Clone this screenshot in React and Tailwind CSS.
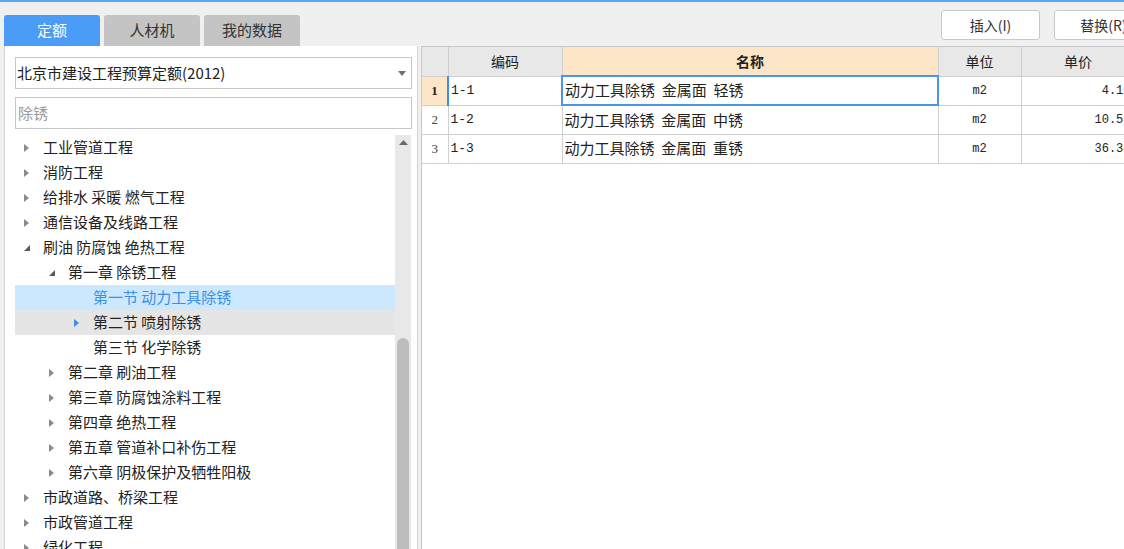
import React from 'react';

const treeRows = [
    { level: 0, text: "工业管道工程", icon: "closed" },
    { level: 0, text: "消防工程", icon: "closed" },
    { level: 0, text: "给排水 采暖 燃气工程", icon: "closed" },
    { level: 0, text: "通信设备及线路工程", icon: "closed" },
    { level: 0, text: "刷油 防腐蚀 绝热工程", icon: "open" },
    { level: 1, text: "第一章 除锈工程", icon: "open" },
    { level: 2, text: "第一节 动力工具除锈", icon: "none", selected: true },
    { level: 2, text: "第二节 喷射除锈", icon: "blue", hover: true },
    { level: 2, text: "第三节 化学除锈", icon: "none" },
    { level: 1, text: "第二章 刷油工程", icon: "closed" },
    { level: 1, text: "第三章 防腐蚀涂料工程", icon: "closed" },
    { level: 1, text: "第四章 绝热工程", icon: "closed" },
    { level: 1, text: "第五章 管道补口补伤工程", icon: "closed" },
    { level: 1, text: "第六章 阴极保护及牺牲阳极", icon: "closed" },
    { level: 0, text: "市政道路、桥梁工程", icon: "closed" },
    { level: 0, text: "市政管道工程", icon: "closed" },
    { level: 0, text: "绿化工程", icon: "closed" },
];

const rows = [
    { no: "1", code: "1-1", name: "动力工具除锈  金属面  轻锈", unit: "m2", price: "4.10" },
    { no: "2", code: "1-2", name: "动力工具除锈  金属面  中锈", unit: "m2", price: "10.57" },
    { no: "3", code: "1-3", name: "动力工具除锈  金属面  重锈", unit: "m2", price: "36.34" },
];

const indent = ["pl-[9px]", "pl-[34px]", "pl-[59px]"];

const TreeIcon = ({ type }) => {
    if (type === "closed")
        return <svg width="5" height="8" viewBox="0 0 5 8"><path d="M0 0 L5 4 L0 8 Z" fill="#8a8a8a" /></svg>;
    if (type === "blue")
        return <svg width="5" height="8" viewBox="0 0 5 8"><path d="M0 0 L5 4 L0 8 Z" fill="#3c8fe8" /></svg>;
    if (type === "open")
        return <svg width="6" height="6" viewBox="0 0 6 6"><path d="M6 0 L6 6 L0 6 Z" fill="#5a5a5a" /></svg>;
    return <span className="w-[5px]" />;
};

const App = () => {
    return (
        <div className="h-[549px] w-[1124px] overflow-hidden bg-[#f0f0f0] border-t-2 border-[#5aa5f5] flex text-[15px] text-[#222]"
             style={{ fontFamily: '"Noto Sans CJK SC", "Noto Sans", sans-serif' }}>
            {/* left side */}
            <div className="ml-[4px] w-[414px] flex flex-col shrink-0">
                <div className="pt-[13px] flex gap-[4px]">
                    <div className="w-[96px] h-[31px] rounded-t-[3px] bg-[#4a9cf7] text-white flex items-center justify-center">定额</div>
                    <div className="w-[96px] h-[31px] rounded-t-[3px] bg-[#c4c4c4] text-[#333] flex items-center justify-center">人材机</div>
                    <div className="w-[96px] h-[31px] rounded-t-[3px] bg-[#c4c4c4] text-[#333] flex items-center justify-center">我的数据</div>
                </div>
                <div className="flex-1 bg-white border-l border-r border-[#d4d4d4] pl-[10px] pr-[6px] pt-[11px] flex flex-col min-h-0">
                    <div className="h-[32px] w-[397px] border border-[#c6c6c6] flex items-center pl-[1px] pr-[5px] overflow-hidden">
                        <span className="flex-1 whitespace-nowrap">北京市建设工程预算定额(2012)</span>
                        <svg width="8" height="5" viewBox="0 0 8 5"><path d="M0 0 L8 0 L4 5 Z" fill="#707070" /></svg>
                    </div>
                    <div className="mt-[8px] h-[32px] w-[397px] border border-[#c6c6c6] flex items-center pl-[2px] text-[#9a9a9a]">除锈</div>
                    <div className="mt-[6px] flex flex-1 min-h-0">
                        <div className="w-[380px] flex flex-col">
                            {treeRows.map((r, i) => (
                                <div key={i}
                                     className={`h-[25px] shrink-0 flex items-center whitespace-nowrap ${indent[r.level]} ${r.selected ? "bg-[#cce8ff] text-[#3a8ee6]" : r.hover ? "bg-[#e5e5e5]" : ""}`}>
                                    <span className="w-[19px] flex items-center"><TreeIcon type={r.icon} /></span>
                                    <span>{r.text}</span>
                                </div>
                            ))}
                        </div>
                        <div className="w-[16px] bg-[#e8e8e8] flex flex-col items-center pt-[5px]">
                            <svg width="9" height="5" viewBox="0 0 9 5"><path d="M0 5 L4.5 0 L9 5 Z" fill="#6a6a6a" /></svg>
                            <div className="mt-[193px] w-[12px] flex-1 bg-[#bdbdbd] rounded-t-[6px]" />
                        </div>
                    </div>
                </div>
            </div>

            {/* right side */}
            <div className="ml-[3px] flex-1 flex flex-col min-w-0">
                <div className="h-[44px] shrink-0 flex items-start pt-[8px] pl-[520px] gap-[14px] text-[14px] text-[#333]">
                    <div className="w-[99px] h-[30px] shrink-0 bg-white border border-[#c8c8c8] rounded-[3px] flex items-center justify-center">插入(I)</div>
                    <div className="w-[99px] h-[30px] shrink-0 bg-white border border-[#c8c8c8] rounded-[3px] flex items-center justify-center">替换(R)</div>
                </div>
                <div className="flex-1 bg-white border-l border-t border-[#c8c8c8] overflow-hidden">
                    <table className="border-collapse table-fixed text-[14px]" style={{ width: 713 }}>
                        <colgroup>
                            <col className="w-[26px]" />
                            <col className="w-[114px]" />
                            <col className="w-[376px]" />
                            <col className="w-[83px]" />
                            <col className="w-[114px]" />
                        </colgroup>
                        <thead>
                            <tr className="h-[29px]">
                                <th className="bg-[#e8e8e8] border border-[#cfcfcf] border-t-0 border-l-0"></th>
                                <th className="bg-[#e8e8e8] border border-[#cfcfcf] border-t-0 font-normal">编码</th>
                                <th className="bg-[#fde6c8] border border-[#cfcfcf] border-t-0 font-bold">名称</th>
                                <th className="bg-[#e8e8e8] border border-[#cfcfcf] border-t-0 font-normal">单位</th>
                                <th className="bg-[#e8e8e8] border border-[#cfcfcf] border-t-0 font-normal">单价</th>
                            </tr>
                        </thead>
                        <tbody>
                            {rows.map((r, i) => (
                                <tr key={i} className="h-[29px]">
                                    <td className={`border border-[#d0d0d0] border-l-0 text-center text-[13px] ${i === 0 ? "bg-[#fde6c8] font-bold" : "text-[#444]"}`}
                                        style={{ fontFamily: '"Liberation Serif", serif' }}>{r.no}</td>
                                    <td className={`border border-[#d0d0d0] pl-[2px] text-[13px] ${i === 0 ? "border-l-2 border-l-[#3c8fe8]" : ""}`}
                                        style={{ fontFamily: '"Liberation Mono", monospace' }}>{r.code}</td>
                                    <td className={`pl-[2px] whitespace-pre text-[15px] ${i === 0 ? "border-2 border-[#4a94ee]" : "border border-[#d0d0d0]"}`}>{r.name}</td>
                                    <td className="border border-[#d0d0d0] text-center text-[12px]"
                                        style={{ fontFamily: '"Liberation Mono", monospace' }}>{r.unit}</td>
                                    <td className="border border-[#d0d0d0] text-right pr-[4px] text-[12px] whitespace-nowrap"
                                        style={{ fontFamily: '"Liberation Mono", monospace' }}>{r.price}</td>
                                </tr>
                            ))}
                        </tbody>
                    </table>
                </div>
            </div>
        </div>
    );
};

export default App;
